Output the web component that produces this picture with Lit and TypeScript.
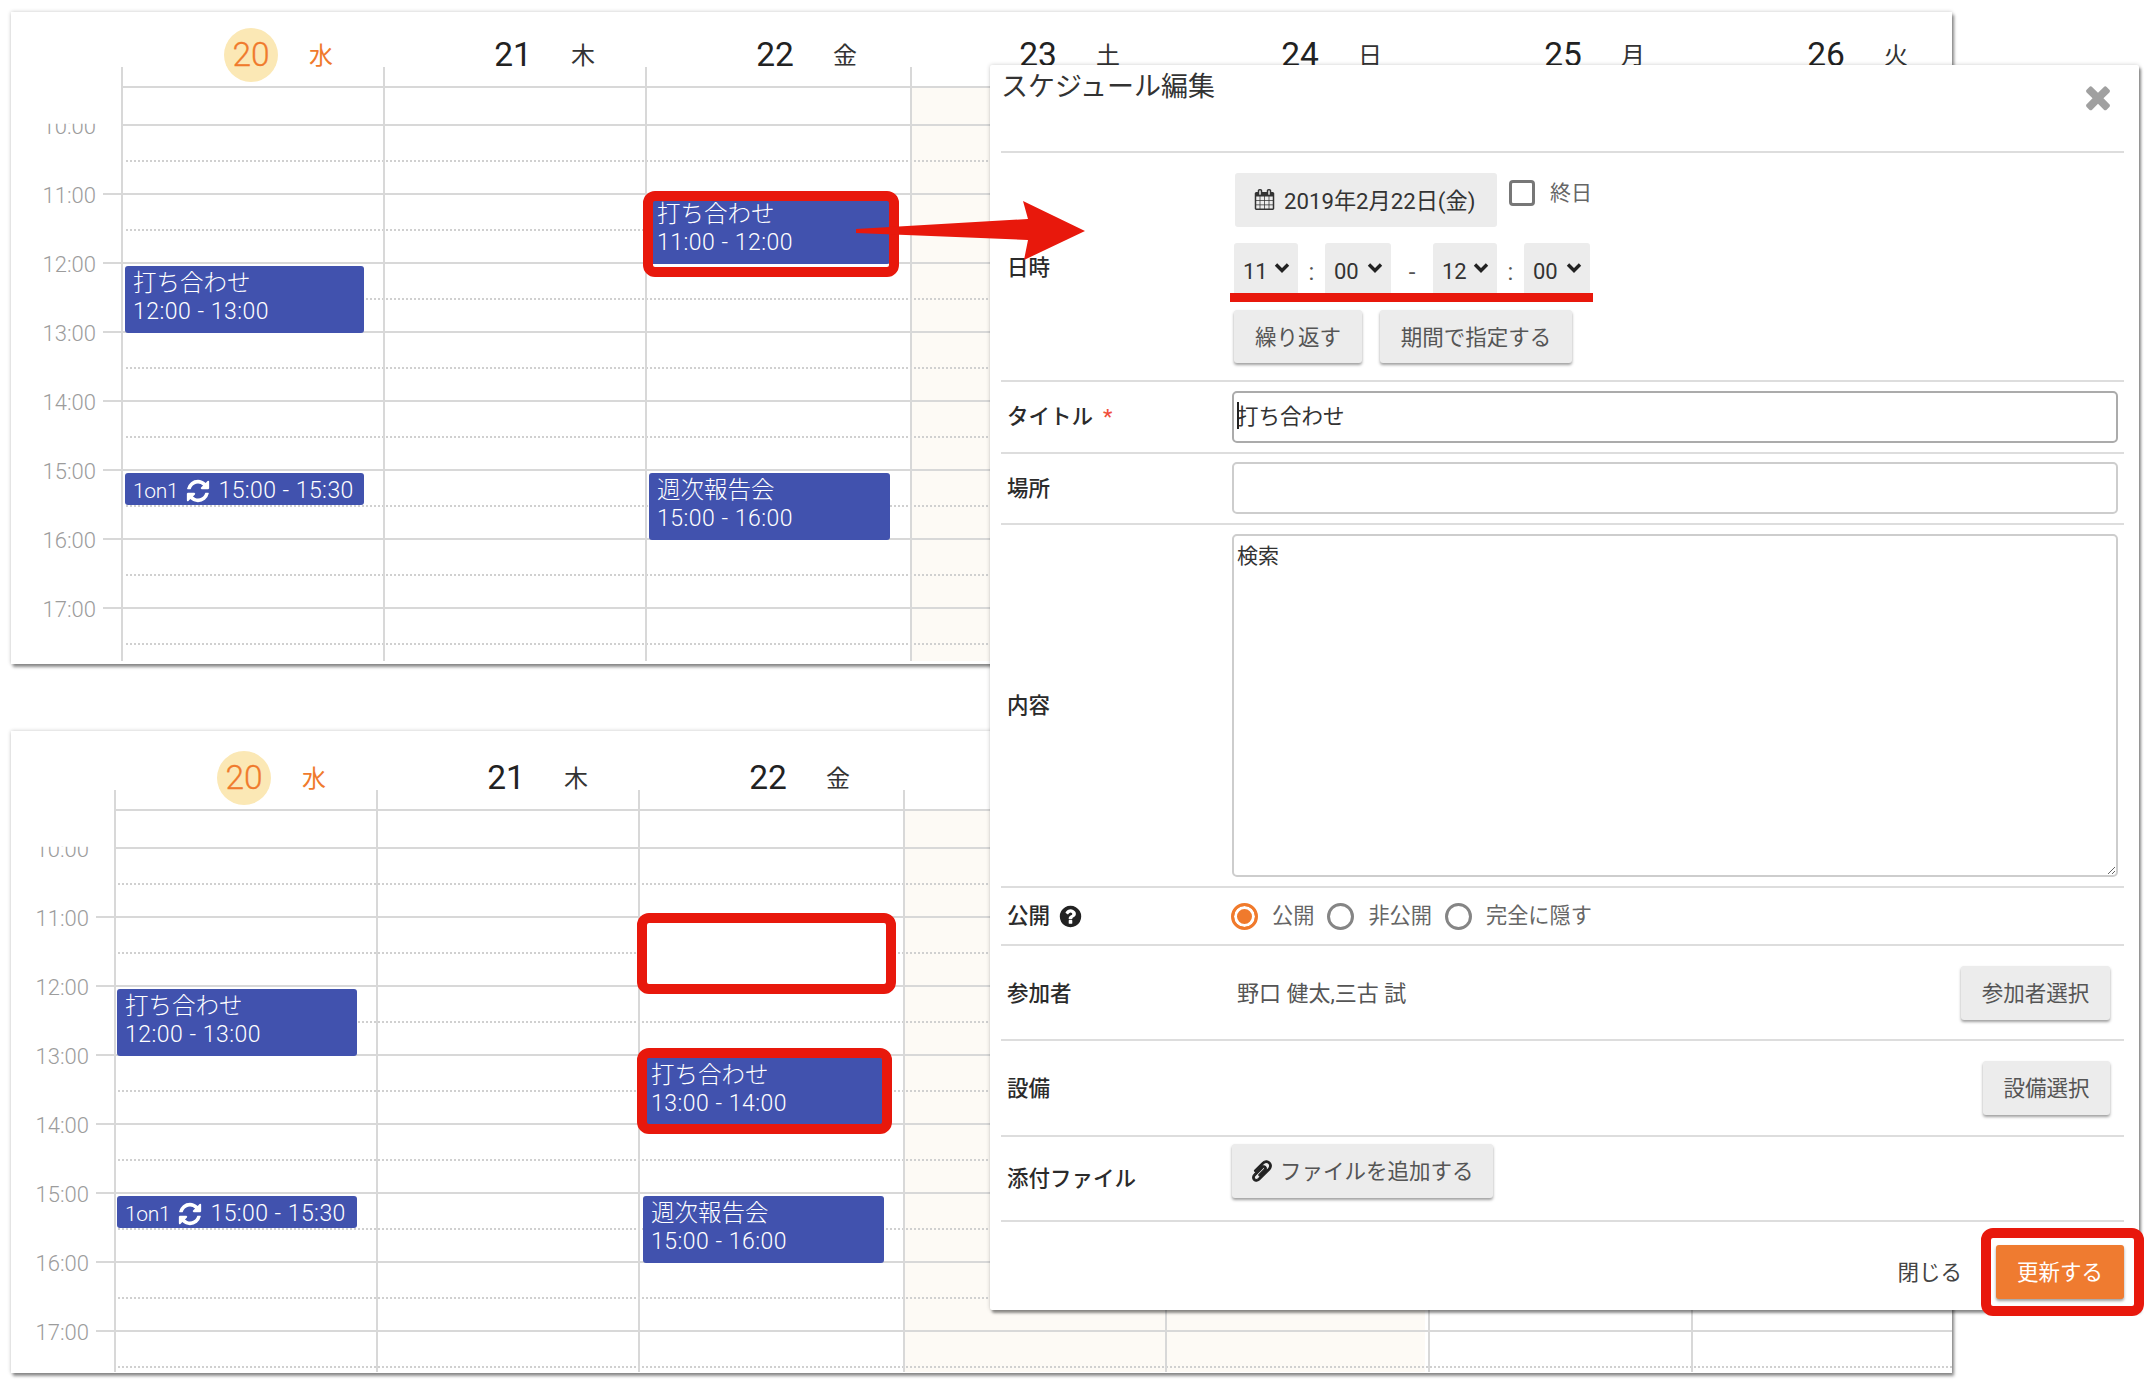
import { LitElement, html, css, svg } from "lit";
import { customElement, property } from "lit/decorators.js";

const FONT = css`Roboto, "Noto Sans CJK JP", sans-serif`;

const ICON = {
  refresh:
    "M1639 1056q0 5-1 7-64 268-268 434.5t-478 166.5q-146 0-282.5-55t-243.5-157l-129 129q-19 19-45 19t-45-19-19-45v-448q0-26 19-45t45-19h448q26 0 45 19t19 45-19 45l-137 137q71 66 161 102t187 36q134 0 250-65t186-179q11-17 53-117 8-23 30-23h192q13 0 22.5 9.5t9.5 22.5zm25-800v448q0 26-19 45t-45 19h-448q-26 0-45-19t-19-45 19-45l138-138q-148-137-349-137-134 0-250 65t-186 179q-11 17-53 117-8 23-30 23h-199q-13 0-22.5-9.5t-9.5-22.5v-7q65-268 270-434.5t480-166.5q146 0 284 55.5t245 156.5l130-129q19-19 45-19t45 19 19 45z",
  times:
    "M1490 1322q0 40-28 68l-136 136q-28 28-68 28t-68-28l-294-294-294 294q-28 28-68 28t-68-28l-136-136q-28-28-28-68t28-68l294-294-294-294q-28-28-28-68t28-68l136-136q28-28 68-28t68 28l294 294 294-294q28-28 68-28t68 28l136 136q28 28 28 68t-28 68l-294 294 294 294q28 28 28 68z",
  question:
    "M1024 1376v-192q0-14-9-23t-23-9h-192q-14 0-23 9t-9 23v192q0 14 9 23t23 9h192q14 0 23-9t9-23zm256-672q0-88-55.5-163t-138.5-116-170-41q-243 0-371 213-15 24 8 42l132 100q7 6 19 6 16 0 25-12 53-68 86-92 34-24 86-24 48 0 85.5 26t37.5 59q0 38-20 61t-68 45q-63 28-115.5 86.5t-52.5 125.5v36q0 14 9 23t23 9h192q14 0 23-9t9-23q0-19 21.5-49.5t54.5-49.5q32-18 49-28.5t46-35 44.5-48 28-60.5 12.5-81zm384 192q0 209-103 385.5t-279.5 279.5-385.5 103-385.5-103-279.5-279.5-103-385.5 103-385.5 279.5-279.5 385.5-103 385.5 103 279.5 279.5 103 385.5z",
  clip:
    "M1596 1385q0 117-79 196t-196 79q-135 0-235-100l-777-776q-113-115-113-271 0-159 110-270t269-111q158 0 273 113l605 606q10 10 10 22 0 16-30.5 46.5t-46.5 30.5q-13 0-23-10l-606-607q-79-77-181-77-106 0-179 75t-73 181q0 105 76 181l776 777q63 63 145 63 64 0 106-42t42-106q0-82-63-145l-581-581q-26-24-60-24-29 0-48 19t-19 48q0 32 25 59l410 410q10 10 10 22 0 16-31 47t-47 31q-12 0-22-10l-410-410q-63-61-63-149 0-82 57-139t139-57q88 0 149 63l581 581q100 98 100 235z",
  calendar:
    "M192 1664h288v-288h-288v288zm352 0h320v-288h-320v288zm-352-352h288v-320h-288v320zm352 0h320v-320h-320v320zm-352-384h288v-288h-288v288zm736 736h320v-288h-320v288zm-384-736h320v-288h-320v288zm768 736h288v-288h-288v288zm-384-352h320v-320h-320v320zm-352-864v-288q0-13-9.5-22.5t-22.5-9.5h-64q-13 0-22.5 9.5t-9.5 22.5v288q0 13 9.5 22.5t22.5 9.5h64q13 0 22.5-9.5t9.5-22.5zm736 864h288v-320h-288v320zm-384-384h320v-288h-320v288zm384 0h288v-288h-288v288zm32-480v-288q0-13-9.5-22.5t-22.5-9.5h-64q-13 0-22.5 9.5t-9.5 22.5v288q0 13 9.5 22.5t22.5 9.5h64q13 0 22.5-9.5t9.5-22.5zm384-64v1280q0 52-38 90t-90 38h-1408q-52 0-90-38t-38-90v-1280q0-52 38-90t90-38h128v-96q0-66 47-113t113-47h64q66 0 113 47t47 113v96h384v-96q0-66 47-113t113-47h64q66 0 113 47t47 113v96h128q52 0 90 38t38 90z",
};

const fa = (d: string, cls: string) =>
  html`<svg class=${cls} viewBox="0 0 1792 1792" fill="currentColor">${svg`<path d=${d}></path>`}</svg>`;

interface Ev {
  x: number;
  start: number;
  w: number;
  h: number;
  title?: string;
  time: string;
  inline?: string;
}

const DAYS = [
  ["20", "水", 262],
  ["21", "木", 262],
  ["22", "金", 263],
  ["23", "土", 262],
  ["24", "日", 263],
  ["25", "月", 263],
  ["26", "火", 256],
] as const;
const LINES = [262, 262, 265, 262, 263, 263, 254];
const HOURS = [10, 11, 12, 13, 14, 15, 16, 17];
const HOUR_H = 69;
const FIRST_H = 38;

@customElement("cal-window")
export class CalWindow extends LitElement {
  @property({ type: Number }) top = 0;
  @property({ type: Number }) height = 0;
  @property({ type: Number }) head = 74;
  @property({ type: Number }) gutter = 110;
  @property({ type: Number }) tick = 55;
  @property({ type: Number }) tail = 3;
  @property({ attribute: false }) events: Ev[] = [];

  static styles = css`
    :host { display: block; position: absolute; left: 11px; width: 1941px; background: #fff;
      box-shadow: 0 0 4px rgba(0,0,0,.22), 2px 3px 3px rgba(0,0,0,.42); font-family: ${FONT}; overflow: hidden; }
    .head { display: flex; align-items: flex-end; box-sizing: border-box; padding-bottom: 4px; }
    .day { flex: none; display: flex; align-items: center; box-sizing: border-box; height: 54px; color: #222; }
    .num { flex: none; width: 54px; height: 54px; border-radius: 50%; display: flex; align-items: center; justify-content: center;
      font-size: 33.5px; line-height: 54px; margin-right: 31px; font-weight: 400; box-sizing: border-box; }
    .wd { font-size: 24px; line-height: 54px; color: #333; padding-top: 1px; }
    .today .num { background: #fbe8b5; color: #f07a2c; font-weight: 300; -webkit-text-stroke: .3px currentColor; }
    .today .wd { color: #f07a2c; }
    .body { position: relative; overflow: hidden; }
    .tint { position: absolute; top: 0; bottom: 0; width: 522px; background: #fdfaf5; }
    .rows { position: relative; }
    .row { display: flex; }
    .label { flex: none; height: 0; box-sizing: border-box; padding-right: 7px; text-align: right; font-size: 22px; font-weight: 300; color: #9c9c9c; }
    .label span { display: block; line-height: 24px; transform: translateY(calc(-50% + 3px)); }
    .label.clip span { clip-path: inset(36% 0 0 0); }
    .mark { flex: none; width: 18px; box-sizing: border-box; border-top: 2px solid #d8d8d8; }
    .mark.off { border-top-color: transparent; }
    .cell { flex: 1; box-sizing: border-box; border-top: 2px solid #d8d8d8; }
    .half { height: 33.5px; border-bottom: 2px dotted #d0d0d0; }
    .lines { position: absolute; right: 0; display: flex; }
    .line { flex: none; box-sizing: border-box; border-left: 2px solid #d8d8d8; }
    .events { position: absolute; left: 0; right: 0; bottom: 0; }
    .ev { position: absolute; box-sizing: border-box; background: #4152ae; border-radius: 3px; color: #fff; padding: 3px 8px 0;
      font-size: 23px; font-weight: 300; line-height: 28px; white-space: nowrap; overflow: hidden; }
    .t1 { display: block; font-size: 23.5px; line-height: 29px; }
    .tm { display: block; letter-spacing: .5px; }
    .one { display: flex; align-items: center; height: 30px; }
    .on { font-size: 21px; letter-spacing: -.3px; }
    .ico { width: 26px; height: 26px; margin: 0 7px 0 7px; flex: none; }
    .one .tm { letter-spacing: .45px; }
  `;

  render() {
    return html`
      <div class="head" style="height:${this.head}px">
        ${DAYS.map(
          ([n, w, width], i) => html`<div class="day ${i === 0 ? "today" : ""}" style="width:${i === 0 ? width + this.gutter : width}px;padding-left:${i === 0 ? this.gutter + 103 : 103}px">
            <span class="num">${n}</span><span class="wd">${w}</span>
          </div>`
        )}
      </div>
      <div class="body" style="height:${this.height - this.head - this.tail}px">
        <div class="tint" style="left:${this.gutter + LINES[0] + LINES[1] + LINES[2]}px"></div>
        <div class="rows">
          <div class="row" style="height:${FIRST_H}px">
            <div class="label" style="width:${this.gutter - 18}px"></div>
            <div class="mark off"></div>
            <div class="cell"></div>
          </div>
          ${HOURS.map(
            (h) => html`<div class="row" style="height:${HOUR_H}px">
              <div class="label ${h === 10 ? "clip" : ""}" style="width:${this.gutter - 18}px"><span>${h}:00</span></div>
              <div class="mark ${h === 10 ? "off" : ""}"></div>
              <div class="cell"><div class="half"></div></div>
            </div>`
          )}
        </div>
      </div>
      <div class="lines" style="top:${this.tick}px;left:${this.gutter}px;bottom:${this.tail}px">
        ${LINES.map((w) => html`<div class="line" style="width:${w}px"></div>`)}
      </div>
      <div class="events" style="top:${this.head}px">
        ${this.events.map(
          (e) => html`<div class="ev" style="left:${this.gutter + e.x}px;top:${FIRST_H + (e.start - 10) * HOUR_H + 4}px;width:${e.w}px;height:${e.h}px">
            ${e.inline
              ? html`<div class="one"><span class="on">${e.inline}</span>${fa(ICON.refresh, "ico")}<span class="tm">${e.time}</span></div>`
              : html`<span class="t1">${e.title}</span><span class="tm">${e.time}</span>`}
          </div>`
        )}
      </div>
    `;
  }
}

@customElement("edit-modal")
export class EditModal extends LitElement {
  static styles = css`
    :host { display: block; position: absolute; left: 990px; top: 65px; width: 1149px; height: 1245px; box-sizing: border-box;
      padding: 0 15px 0 11px; background: #fff; border-radius: 2px; font-family: ${FONT}; color: #333; font-size: 21px;
      box-shadow: 0 0 4px rgba(0,0,0,.2), 2px 3px 3px rgba(0,0,0,.42); }
    .hd { height: 86px; display: flex; justify-content: space-between; align-items: flex-start; border-bottom: 2px solid #ddd; }
    .ttl { font-size: 27px; line-height: 44px; color: #333; }
    .x { width: 36px; height: 36px; margin: 14px 8px 0 0; color: #a0a0a0; }
    .row { display: grid; grid-template-columns: 231px 1fr; align-items: center; border-bottom: 2px solid #ddd; box-sizing: content-box; }
    .lb { padding-left: 6px; font-weight: 500; font-size: 21.5px; line-height: 30px; color: #2b2b2b; display: flex; align-items: center; }
    .req { color: #f0503c; margin-left: 10px; font-size: 21px; }
    .q { width: 25px; height: 25px; margin-left: 8px; color: #222; }
    .ctl { padding-right: 6px; min-width: 0; }
    .r-date { padding: 20px 0 17px; }
    .r-title { padding: 9px 0 9px; }
    .r-place { padding: 8px 0 9px; }
    .r-place .lb, .r-mem .lb, .r-fac .lb { padding-top: 2px; }
    .r-body { padding: 9px 0 9px; }
    .r-open { height: 56px; }
    .r-mem { height: 93px; }
    .r-fac { height: 94px; }
    .r-file { height: 83px; }
    .l1 { display: flex; align-items: flex-start; margin-left: 3px; }
    .date { display: flex; align-items: center; width: 262px; height: 54px; box-sizing: border-box; padding: 0 0 2px 19px; background: #ececec; border-radius: 3px; white-space: nowrap; font-size: 22.2px; }
    .cal { width: 21px; height: 21px; margin-right: 9px; flex: none; }
    .chk { width: 26px; height: 26px; box-sizing: border-box; border: 3px solid #777; border-radius: 4px; margin: 7px 15px 0 12px; flex: none; }
    .all { color: #666; line-height: 26px; margin-top: 7px; }
    .l2 { display: flex; align-items: center; margin: 16px 0 0 2px; height: 54px; }
    .sel { position: relative; display: block; height: 54px; background: #ececec; border-radius: 3px; flex: none; }
    select { appearance: none; -webkit-appearance: none; border: 0; background: transparent; margin: 0; width: 100%; height: 54px; padding: 2px 0 0 9px;
      font: 22px ${FONT}; color: #333; outline: none; }
    .chev { position: absolute; right: 8px; top: 19px; width: 16px; height: 12px; pointer-events: none; }
    .sep { flex: none; text-align: center; font-size: 24px; color: #555; padding-top: 4px; }
    .l3 { display: flex; gap: 18px; margin: 13px 0 0 2px; }
    .btn { display: flex; align-items: center; justify-content: center; height: 52px; box-sizing: border-box; background: #ececec; border-radius: 3px; color: #555;
      box-shadow: 0 2px 3px rgba(0,0,0,.38); white-space: nowrap; font-size: 21.5px; padding-bottom: 3px; }
    .l3 .btn { height: 53px; }
    .field { position: relative; display: block; width: 100%; height: 52px; box-sizing: border-box; border: 2px solid #cdcdcd; border-radius: 5px; background: #fff; padding: 0 3px;
      font: 21px ${FONT}; color: #333; outline: none; margin: 0; }
    .wrap { position: relative; }
    .caret { position: absolute; left: 5px; top: 11px; width: 2px; height: 27px; background: #222; }
    input.main { border-color: #ababab; font-size: 21.5px; padding-bottom: 6px; }
    textarea.field { height: 343px; padding: 6px 3px 0; line-height: 28px; resize: both; min-width: 100%; max-width: 100%; vertical-align: top; }
    .radios { display: flex; align-items: center; margin-left: -1px; }
    .rd { width: 27px; height: 27px; box-sizing: border-box; border: 3px solid #858585; border-radius: 50%; flex: none; margin-right: 14px; }
    .rd.on { border-color: #f07a2c; background: #f07a2c; box-shadow: inset 0 0 0 3px #fff; }
    .rt { color: #666; margin-right: 13px; font-size: 21.2px; line-height: 27px; padding-bottom: 1px; }
    .between { display: flex; justify-content: space-between; align-items: center; padding-left: 5px; padding-right: 14px; }
    .val { color: #555; font-size: 22px; padding-bottom: 3px; }
    .file { width: 261px; height: 54px; gap: 6px; font-size: 21.5px; justify-content: flex-start; padding-left: 18px; }
    .r-file .ctl { align-self: start; padding-top: 7px; }
    .pc { width: 24px; height: 24px; color: #222; stroke: currentColor; stroke-width: 80; transform: scaleX(-1); flex: none; margin-top: 2px; }
    .ft { display: flex; justify-content: flex-end; align-items: center; padding-top: 23px; }
    .close { color: #444; margin-right: 34px; padding-bottom: 3px; font-size: 21.5px; }
    .go { width: 128px; height: 54px; background: #ef7b30; color: #fff; }
  `;

  private sel(v: string, w: number) {
    return html`<label class="sel" style="width:${w}px">
      <select><option>${v}</option></select>
      <svg class="chev" viewBox="0 0 16 12" fill="none" stroke="#222" stroke-width="3.4">${svg`<path d="M2 2.5 8 8.5 14 2.5"></path>`}</svg>
    </label>`;
  }

  render() {
    return html`
      <div class="hd">
        <div class="ttl">スケジュール編集</div>
        ${fa(ICON.times, "x")}
      </div>
      <div class="row r-date">
        <div class="lb">日時</div>
        <div class="ctl">
          <div class="l1">
            <div class="date">${fa(ICON.calendar, "cal")}2019年2月22日(金)</div>
            <span class="chk"></span><span class="all">終日</span>
          </div>
          <div class="l2">
            ${this.sel("11", 64)}<span class="sep" style="width:27px">:</span>${this.sel("00", 66)}<span class="sep" style="width:42px">-</span>${this.sel("12", 64)}<span class="sep" style="width:27px">:</span>${this.sel("00", 66)}
          </div>
          <div class="l3">
            <div class="btn" style="width:128px">繰り返す</div>
            <div class="btn" style="width:192px">期間で指定する</div>
          </div>
        </div>
      </div>
      <div class="row r-title">
        <div class="lb">タイトル<span class="req">*</span></div>
        <div class="ctl wrap"><input class="field main" .value=${"打ち合わせ"} /><span class="caret"></span></div>
      </div>
      <div class="row r-place">
        <div class="lb">場所</div>
        <div class="ctl"><input class="field" /></div>
      </div>
      <div class="row r-body">
        <div class="lb">内容</div>
        <div class="ctl"><textarea class="field" .value=${"検索"}></textarea></div>
      </div>
      <div class="row r-open">
        <div class="lb">公開${fa(ICON.question, "q")}</div>
        <div class="ctl radios">
          <span class="rd on"></span><span class="rt">公開</span>
          <span class="rd"></span><span class="rt">非公開</span>
          <span class="rd"></span><span class="rt">完全に隠す</span>
        </div>
      </div>
      <div class="row r-mem">
        <div class="lb">参加者</div>
        <div class="between"><span class="val">野口 健太,三古 試</span><div class="btn" style="width:149px;height:54px">参加者選択</div></div>
      </div>
      <div class="row r-fac">
        <div class="lb">設備</div>
        <div class="between"><span></span><div class="btn" style="width:127px;height:54px">設備選択</div></div>
      </div>
      <div class="row r-file">
        <div class="lb">添付ファイル</div>
        <div class="ctl"><div class="btn file">${fa(ICON.clip, "pc")}ファイルを追加する</div></div>
      </div>
      <div class="ft">
        <span class="close">閉じる</span>
        <div class="btn go">更新する</div>
      </div>
    `;
  }
}

const TOP_EVENTS: Ev[] = [
  { x: 4, start: 12, w: 239, h: 67, title: "打ち合わせ", time: "12:00 - 13:00" },
  { x: 4, start: 15, w: 239, h: 32, inline: "1on1", time: "15:00 - 15:30" },
  { x: 528, start: 11, w: 241, h: 67, title: "打ち合わせ", time: "11:00 - 12:00" },
  { x: 528, start: 15, w: 241, h: 67, title: "週次報告会", time: "15:00 - 16:00" },
];
const BOTTOM_EVENTS: Ev[] = [
  { x: 3, start: 12, w: 240, h: 67, title: "打ち合わせ", time: "12:00 - 13:00" },
  { x: 3, start: 15, w: 240, h: 32, inline: "1on1", time: "15:00 - 15:30" },
  { x: 529, start: 13, w: 241, h: 67, title: "打ち合わせ", time: "13:00 - 14:00" },
  { x: 529, start: 15, w: 241, h: 67, title: "週次報告会", time: "15:00 - 16:00" },
];
const BOXES = [
  { x: 643, y: 191, w: 256, h: 86, fill: false },
  { x: 637, y: 913, w: 259, h: 81, fill: true },
  { x: 637, y: 1048, w: 255, h: 86, fill: false },
  { x: 1981, y: 1228, w: 163, h: 88, fill: false },
];

@customElement("app-root")
export class AppRoot extends LitElement {
  static styles = css`
    :host { display: block; position: relative; width: 2156px; height: 1390px; background: #fff; overflow: hidden; }
    .box { position: absolute; box-sizing: border-box; border: 10px solid #e8180c; border-radius: 12px; }
    .fill { background: #fff; }
    .bar { position: absolute; left: 1230px; top: 293px; width: 363px; height: 9px; background: #e8180c; }
    .arrow { position: absolute; left: 850px; top: 195px; width: 240px; height: 70px; }
  `;

  render() {
    return html`
      <cal-window style="top:12px;height:652px" .height=${652} .head=${74} .gutter=${110} .tick=${55} .tail=${3} .events=${TOP_EVENTS}></cal-window>
      <cal-window style="top:731px;height:642px" .height=${642} .head=${78} .gutter=${103} .tick=${59} .tail=${1} .events=${BOTTOM_EVENTS}></cal-window>
      <edit-modal></edit-modal>
      ${BOXES.map(
        (b) => html`<div class="box ${b.fill ? "fill" : ""}" style="left:${b.x}px;top:${b.y}px;width:${b.w}px;height:${b.h}px"></div>`
      )}
      <div class="bar"></div>
      <svg class="arrow" viewBox="850 195 240 70">${svg`<polygon fill="#e8180c" points="856,229 1028,219 1023,201 1085,231 1024,260 1028,240 856,233"></polygon>`}</svg>
    `;
  }
}
